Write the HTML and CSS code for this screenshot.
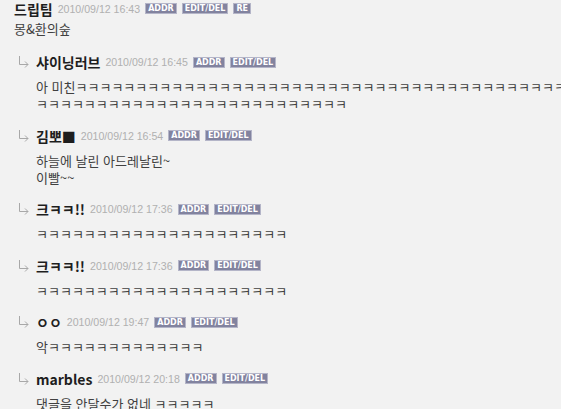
FILE: index.html
```html
<!DOCTYPE html>
<html lang="ko">
<head>
    <meta charset="UTF-8">
    <meta name="viewport" content="width=device-width, initial-scale=1.0">
    <title>댓글</title>
    <link rel="stylesheet" href="styles.css">
</head>
<body>
    <div class="comments">
        <div class="post">
            <div class="head">
                <b class="name">드립팀</b>
                <span class="date">2010/09/12 16:43</span>
                <span class="tag">ADDR</span>
                <span class="tag">EDIT/DEL</span>
                <span class="tag">RE</span>
            </div>
            <div class="text">몽&amp;환의숲</div>
        </div>

        <div class="reply">
            <div class="head">
                <svg class="arr" width="11" height="12" viewBox="0 0 11 12"><path d="M1.5 0V8.5H10M7 5.5L10 8.5L7 11.5" fill="none" stroke="#a8a8a8" stroke-width="1"/></svg>
                <b class="name">샤이닝러브</b>
                <span class="date">2010/09/12 16:45</span>
                <span class="tag">ADDR</span>
                <span class="tag">EDIT/DEL</span>
            </div>
            <div class="text">아 미친ㅋㅋㅋㅋㅋㅋㅋㅋㅋㅋㅋㅋㅋㅋㅋㅋㅋㅋㅋㅋㅋㅋㅋㅋㅋㅋㅋㅋㅋㅋㅋㅋㅋㅋㅋㅋㅋㅋㅋㅋㅋ<br>ㅋㅋㅋㅋㅋㅋㅋㅋㅋㅋㅋㅋㅋㅋㅋㅋㅋㅋㅋㅋㅋㅋㅋㅋㅋㅋ</div>
        </div>

        <div class="reply">
            <div class="head">
                <svg class="arr" width="11" height="12" viewBox="0 0 11 12"><path d="M1.5 0V8.5H10M7 5.5L10 8.5L7 11.5" fill="none" stroke="#a8a8a8" stroke-width="1"/></svg>
                <b class="name">김뽀■</b>
                <span class="date">2010/09/12 16:54</span>
                <span class="tag">ADDR</span>
                <span class="tag">EDIT/DEL</span>
            </div>
            <div class="text">하늘에 날린 아드레날린~<br>이빨~~</div>
        </div>

        <div class="reply">
            <div class="head">
                <svg class="arr" width="11" height="12" viewBox="0 0 11 12"><path d="M1.5 0V8.5H10M7 5.5L10 8.5L7 11.5" fill="none" stroke="#a8a8a8" stroke-width="1"/></svg>
                <b class="name">크ㅋㅋ!!</b>
                <span class="date">2010/09/12 17:36</span>
                <span class="tag">ADDR</span>
                <span class="tag">EDIT/DEL</span>
            </div>
            <div class="text">ㅋㅋㅋㅋㅋㅋㅋㅋㅋㅋㅋㅋㅋㅋㅋㅋㅋㅋㅋㅋㅋ</div>
        </div>

        <div class="reply">
            <div class="head">
                <svg class="arr" width="11" height="12" viewBox="0 0 11 12"><path d="M1.5 0V8.5H10M7 5.5L10 8.5L7 11.5" fill="none" stroke="#a8a8a8" stroke-width="1"/></svg>
                <b class="name">크ㅋㅋ!!</b>
                <span class="date">2010/09/12 17:36</span>
                <span class="tag">ADDR</span>
                <span class="tag">EDIT/DEL</span>
            </div>
            <div class="text">ㅋㅋㅋㅋㅋㅋㅋㅋㅋㅋㅋㅋㅋㅋㅋㅋㅋㅋㅋㅋㅋ</div>
        </div>

        <div class="reply">
            <div class="head">
                <svg class="arr" width="11" height="12" viewBox="0 0 11 12"><path d="M1.5 0V8.5H10M7 5.5L10 8.5L7 11.5" fill="none" stroke="#a8a8a8" stroke-width="1"/></svg>
                <b class="name">ㅇㅇ</b>
                <span class="date">2010/09/12 19:47</span>
                <span class="tag">ADDR</span>
                <span class="tag">EDIT/DEL</span>
            </div>
            <div class="text">악ㅋㅋㅋㅋㅋㅋㅋㅋㅋㅋㅋㅋㅋ</div>
        </div>

        <div class="reply">
            <div class="head">
                <svg class="arr" width="11" height="12" viewBox="0 0 11 12"><path d="M1.5 0V8.5H10M7 5.5L10 8.5L7 11.5" fill="none" stroke="#a8a8a8" stroke-width="1"/></svg>
                <b class="name">marbles</b>
                <span class="date">2010/09/12 20:18</span>
                <span class="tag">ADDR</span>
                <span class="tag">EDIT/DEL</span>
            </div>
            <div class="text">댓글을 안달수가 없네 ㅋㅋㅋㅋㅋ</div>
        </div>
    </div>
</body>
</html>
```

FILE: styles.css
```css
body {
    margin: 0;
    padding: 0;
    background-color: #f2f2f2;
    font-family: "Noto Sans CJK KR", "Liberation Sans", sans-serif;
    font-size: 13px;
    color: #404040;
    overflow: hidden;
}
.comments {
    padding-left: 14px;
}
.head {
    display: flex;
    align-items: center;
    gap: 4px;
    height: 18px;
    white-space: nowrap;
}
.post .head {
    height: 17px;
}
.name {
    font-size: 14px;
    font-weight: bold;
    color: #1e1e1e;
    margin-right: 1px;
}
.date {
    font-family: "Liberation Sans", sans-serif;
    font-size: 10.6px;
    color: #b0b0b0;
}
.tag {
    display: inline-block;
    background-color: #82839f;
    border: 1px solid #b4b5c8;
    color: #fff;
    font-family: "DejaVu Sans", sans-serif;
    font-weight: bold;
    font-size: 8px;
    line-height: 9px;
    padding: 0 2px;
    margin-left: 1px;
}
.text {
    line-height: 17px;
    white-space: nowrap;
}
.post .text {
    margin-top: 3px;
    margin-bottom: 16px;
}
.reply {
    padding-left: 4px;
    margin-bottom: 14.5px;
}
.reply .text {
    margin-top: 7px;
    padding-left: 18px;
}
.arr {
    margin-right: 3px;
}
```
